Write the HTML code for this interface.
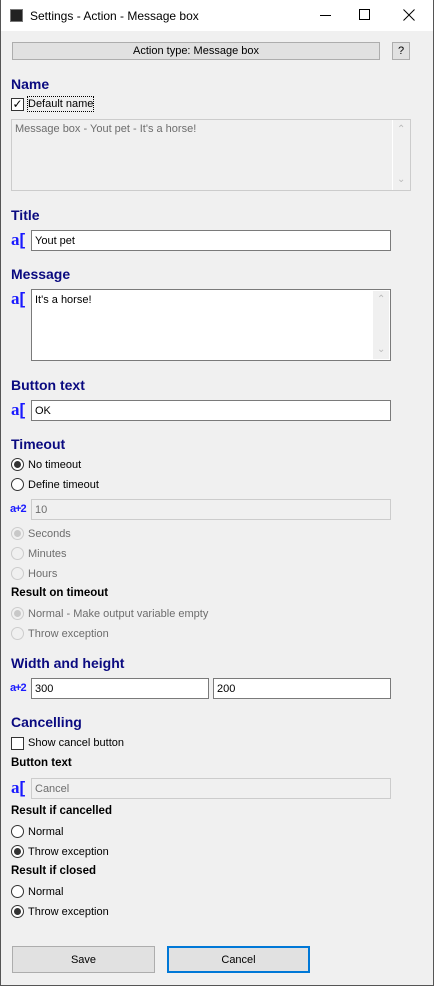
<!DOCTYPE html>
<html><head><meta charset="utf-8"><style>
*{margin:0;padding:0;box-sizing:border-box}
body{width:434px;height:986px;background:#f0f0f0;font-family:"Liberation Sans",sans-serif;font-size:11px;color:#000;position:relative;overflow:hidden}
.a{position:absolute}
.win{left:0;top:0;width:434px;height:986px;border:1px solid #555;border-top:none}
.tb{left:0;top:0;width:434px;height:31px;background:#fff}
.h{position:absolute;left:11px;font-weight:bold;font-size:14px;color:#0a0a80}
.b{position:absolute;left:11px;font-weight:bold;font-size:11.5px}
.in{position:absolute;background:#fff;border:1px solid #7a7a7a;padding:4px 0 0 3px;height:21px}
.dis{background:#f0f0f0;border-color:#ccc;color:#6d6d6d}
.r{position:absolute;left:11px;height:14px;line-height:14px;padding-left:17px}
.r::before{content:"";position:absolute;left:0;top:0;width:11px;height:11px;border:1px solid #333;border-radius:50%;background:#fff}
.r.on::after{content:"";position:absolute;left:3px;top:3px;width:7px;height:7px;border-radius:50%;background:#333}
.r.g{color:#6d6d6d}
.r.g::before{border-color:#ccc;background:#f0f0f0}
.r.g.on::after{background:#c8c8c8}
.ic{position:absolute;left:11px;color:#1a1aff;font-weight:bold;font-family:"Liberation Serif",serif;font-size:17px;line-height:14px}
.ic2{position:absolute;left:10px;color:#1a1aff;font-weight:bold;font-size:11px;letter-spacing:-1px}
.btn{position:absolute;top:946px;height:27px;width:143px;background:#e1e1e1;border:1px solid #adadad;text-align:center;line-height:25px}
.sb{position:absolute;color:#bbb;font-size:10px}
</style></head><body>
<div class="a tb"></div>
<div class="a" style="left:10px;top:9px;width:13px;height:13px;background:#222;border:1px solid #777"></div>
<div class="a" style="left:30px;top:9px;font-size:12px">Settings - Action - Message box</div>
<div class="a" style="left:320px;top:15px;width:11px;height:1px;background:#000"></div>
<div class="a" style="left:359px;top:9px;width:11px;height:11px;border:1px solid #000"></div>
<svg class="a" style="left:403px;top:9px" width="12" height="12"><path d="M0.5 0.5L11.5 11.5M11.5 0.5L0.5 11.5" stroke="#000" stroke-width="1"/></svg>
<div class="a" style="left:12px;top:42px;width:368px;height:18px;background:#e1e1e1;border:1px solid #adadad;text-align:center;line-height:16px">Action type: Message box</div>
<div class="a" style="left:392px;top:42px;width:18px;height:18px;background:#e1e1e1;border:1px solid #adadad;text-align:center;line-height:16px">?</div>
<div class="h" style="top:76px">Name</div>
<div class="a" style="left:11px;top:98px;width:13px;height:13px;border:1px solid #333;background:#fff;font-size:12px;line-height:10px;text-align:center">✓</div>
<div class="a" style="left:28px;top:97px;outline:1px dotted #000;line-height:14px">Default name</div>
<div class="a" style="left:11px;top:119px;width:400px;height:72px;border:1px solid #ccc;color:#6d6d6d;padding:3px 3px">Message box - Yout pet - It's a horse!</div>
<div class="a" style="left:392px;top:120px;width:1px;height:70px;background:#fff"></div>
<div class="sb" style="left:397px;top:124px">⌃</div><div class="sb" style="left:397px;top:174px">⌄</div>
<div class="h" style="top:207px">Title</div>
<div class="ic" style="top:233px">a<span style="font-family:Liberation Sans">[</span></div>
<div class="in" style="left:31px;top:230px;width:360px">Yout pet</div>
<div class="h" style="top:266px">Message</div>
<div class="ic" style="top:292px">a<span style="font-family:Liberation Sans">[</span></div>
<div class="in" style="left:31px;top:289px;width:360px;height:72px">It's a horse!</div>
<div class="a" style="left:373px;top:291px;width:16px;height:68px;background:#f0f0f0"></div>
<div class="sb" style="left:377px;top:294px">⌃</div><div class="sb" style="left:377px;top:344px">⌄</div>
<div class="h" style="top:377px">Button text</div>
<div class="ic" style="top:403px">a<span style="font-family:Liberation Sans">[</span></div>
<div class="in" style="left:31px;top:400px;width:360px">OK</div>
<div class="h" style="top:436px">Timeout</div>
<div class="r on" style="top:458px">No timeout</div>
<div class="r" style="top:478px">Define timeout</div>
<div class="ic2" style="top:503px">a+2</div>
<div class="in dis" style="left:31px;top:499px;width:360px">10</div>
<div class="r g on" style="top:527px">Seconds</div>
<div class="r g" style="top:547px">Minutes</div>
<div class="r g" style="top:567px">Hours</div>
<div class="b" style="top:587px">Result on timeout</div>
<div class="r g on" style="top:607px">Normal - Make output variable empty</div>
<div class="r g" style="top:627px">Throw exception</div>
<div class="h" style="top:655px">Width and height</div>
<div class="ic2" style="top:682px">a+2</div>
<div class="in" style="left:31px;top:678px;width:178px">300</div>
<div class="in" style="left:213px;top:678px;width:178px">200</div>
<div class="h" style="top:714px">Cancelling</div>
<div class="a" style="left:11px;top:737px;width:13px;height:13px;border:1px solid #333;background:#fff"></div>
<div class="a" style="left:28px;top:737px">Show cancel button</div>
<div class="b" style="top:757px">Button text</div>
<div class="ic" style="top:781px">a<span style="font-family:Liberation Sans">[</span></div>
<div class="in dis" style="left:31px;top:778px;width:360px">Cancel</div>
<div class="b" style="top:805px">Result if cancelled</div>
<div class="r" style="top:825px">Normal</div>
<div class="r on" style="top:845px">Throw exception</div>
<div class="b" style="top:865px">Result if closed</div>
<div class="r" style="top:885px">Normal</div>
<div class="r on" style="top:905px">Throw exception</div>
<div class="btn" style="left:12px;line-height:26px">Save</div>
<div class="btn" style="left:167px;border:2px solid #0078d7;line-height:24px">Cancel</div>
<div class="a win"></div>
</body></html>
